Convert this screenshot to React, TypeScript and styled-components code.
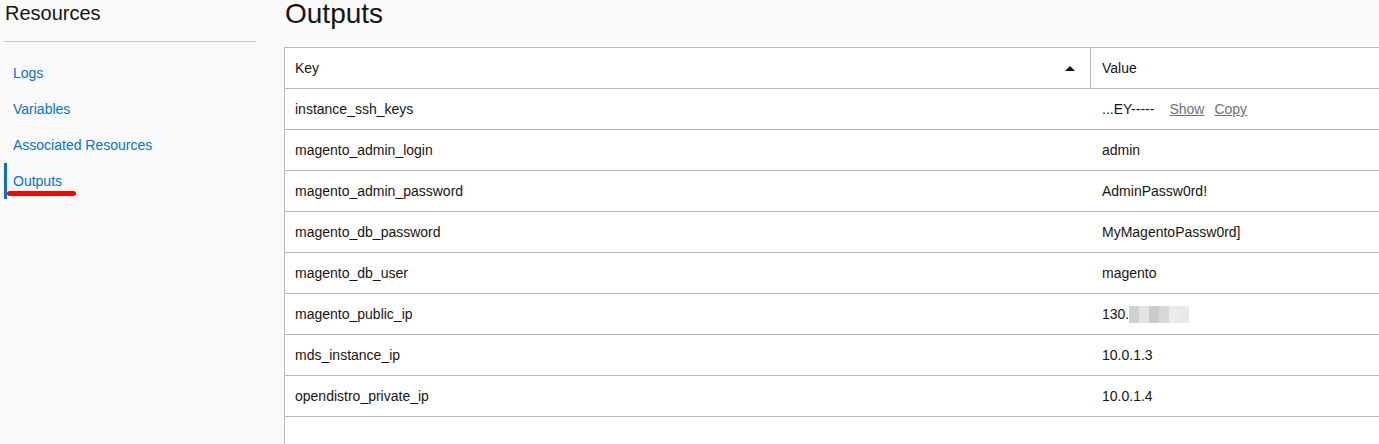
import React from "react";
import styled, { createGlobalStyle } from "styled-components";

const Global = createGlobalStyle`
  html, body { margin: 0; padding: 0; background: #fafafa; overflow: hidden; }
  body { font-family: "Liberation Sans", Arial, sans-serif; color: #161513; }
`;

const Page = styled.div`
  display: flex;
  gap: 28px;
  height: 444px;
`;

const Sidebar = styled.aside`
  width: 252px;
  margin-left: 4px;
  flex-shrink: 0;
`;

const SideTitle = styled.h2`
  margin: 0;
  padding: 0 0 15px 1px;
  font-size: 20px;
  line-height: 26px;
  font-weight: normal;
  border-bottom: 1px solid #c4c6c9;
`;

const NavList = styled.nav`
  margin-top: 13px;
  display: flex;
  flex-direction: column;
`;

const NavItem = styled.a<{ $active?: boolean }>`
  position: relative;
  display: flex;
  align-items: center;
  height: 36px;
  padding-left: 6px;
  font-size: 14px;
  color: #0572ce;
  text-decoration: none;
  border-left: 3px solid ${(p) => (p.$active ? "#0572ce" : "transparent")};
`;

const Annotation = styled.span`
  position: absolute;
  left: 0px;
  top: 28px;
  width: 69px;
  height: 5px;
  border-radius: 3px;
  background: #ff0000;
`;

const Main = styled.main`
  flex: 1;
  display: flex;
  flex-direction: column;
  min-width: 0;
`;

const Title = styled.h1`
  margin: 0 0 20px 1px;
  font-size: 28px;
  line-height: 27px;
  font-weight: normal;
`;

const Panel = styled.div`
  flex: 1;
  background: #ffffff;
  border-left: 1px solid #b5b8bd;
  border-top: 1px solid #b5b8bd;
`;

const Row = styled.div`
  display: grid;
  grid-template-columns: 805px 1fr;
  height: 40px;
  border-bottom: 1px solid #b5b8bd;
  font-size: 14px;
`;

const Cell = styled.div<{ $sep?: boolean }>`
  display: flex;
  align-items: center;
  padding-left: ${(p) => (p.$sep ? "11px" : "10px")};
  border-left: ${(p) => (p.$sep ? "1px solid #b5b8bd" : "none")};
  position: relative;
`;

const ValueCell = styled.div`
  display: flex;
  align-items: center;
  padding-left: 12px;
`;

const SortArrow = styled.span`
  position: absolute;
  right: 15px;
  top: 18px;
  width: 0;
  height: 0;
  border-left: 5px solid transparent;
  border-right: 5px solid transparent;
  border-bottom: 5px solid #161513;
`;

const ActionLink = styled.a<{ $first?: boolean }>`
  color: #6f6f6f;
  text-decoration: underline;
  margin-left: ${(p) => (p.$first ? "15px" : "10px")};
`;

const Blur = styled.span`
  display: inline-flex;
  height: 17px;
  margin-top: 1px;
`;

const BlurBlock = styled.span<{ $c: string }>`
  width: 10px;
  height: 17px;
  background: ${(p) => p.$c};
`;

const rows: [string, React.ReactNode][] = [
  [
    "instance_ssh_keys",
    <>
      ...EY-----
      <ActionLink $first>Show</ActionLink>
      <ActionLink>Copy</ActionLink>
    </>,
  ],
  ["magento_admin_login", "admin"],
  ["magento_admin_password", "AdminPassw0rd!"],
  ["magento_db_password", "MyMagentoPassw0rd]"],
  ["magento_db_user", "magento"],
  [
    "magento_public_ip",
    <>
      130.
      <Blur>
        {["#d2d1d1", "#e4e4e5", "#cbcbca", "#d9d8d8", "#ebebe9", "#e9e9ea"].map((c, i) => (
          <BlurBlock key={i} $c={c} />
        ))}
      </Blur>
    </>,
  ],
  ["mds_instance_ip", "10.0.1.3"],
  ["opendistro_private_ip", "10.0.1.4"],
];

export default function App() {
  return (
    <>
      <Global />
      <Page>
        <Sidebar>
          <SideTitle>Resources</SideTitle>
          <NavList>
            <NavItem>Logs</NavItem>
            <NavItem>Variables</NavItem>
            <NavItem>Associated Resources</NavItem>
            <NavItem $active>
              Outputs
              <Annotation />
            </NavItem>
          </NavList>
        </Sidebar>
        <Main>
          <Title>Outputs</Title>
          <Panel>
            <Row>
              <Cell>
                Key
                <SortArrow />
              </Cell>
              <Cell $sep>Value</Cell>
            </Row>
            {rows.map(([k, v]) => (
              <Row key={k}>
                <Cell>{k}</Cell>
                <ValueCell>{v}</ValueCell>
              </Row>
            ))}
          </Panel>
        </Main>
      </Page>
    </>
  );
}
